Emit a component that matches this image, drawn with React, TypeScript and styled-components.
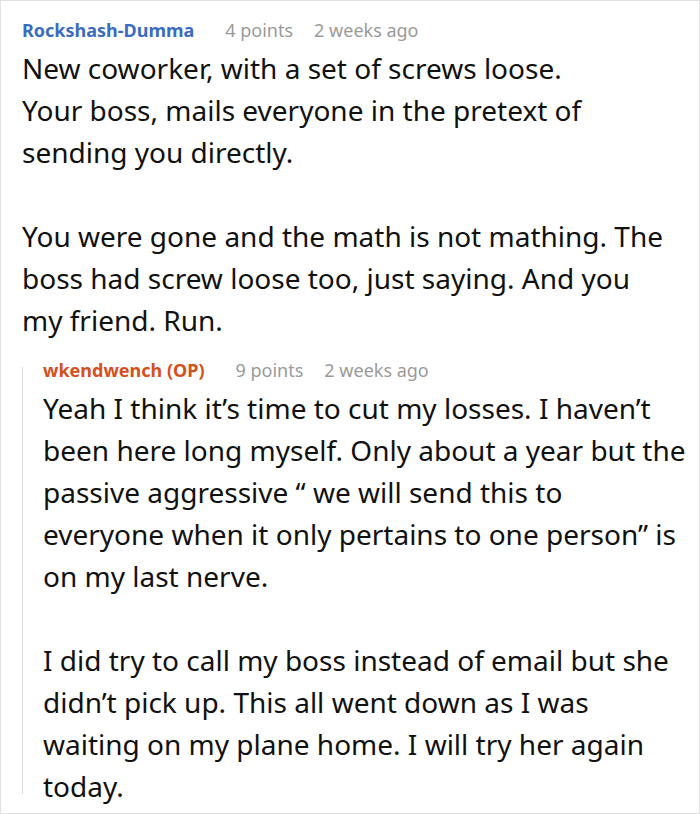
import * as React from 'react';
import styled, { createGlobalStyle } from 'styled-components';

const GlobalStyle = createGlobalStyle`
  html, body {
    margin: 0;
    padding: 0;
    background: #ffffff;
  }
  body {
    font-family: "Noto Sans", "Open Sans", sans-serif;
  }
`;

const Frame = styled.div`
  box-sizing: border-box;
  width: 700px;
  height: 814px;
  border: 1px solid #e2e2e2;
  padding: 12px 29px 0 21px;
  overflow: hidden;
`;

// replies hang slightly wider than their parent
const Comment = styled.div<{ $reply?: boolean }>`
  position: relative;
  display: flex;
  flex-direction: column;
  ${(p) =>
    p.$reply &&
    `
    margin-top: 12px;
    margin-right: -18px;
    padding-left: 21px;
    &::before {
      content: "";
      position: absolute;
      left: 0;
      top: 14px;
      bottom: 13px;
      width: 1px;
      background: #dcdcdc;
    }
  `}
`;

const Meta = styled.div`
  display: flex;
  align-items: baseline;
  gap: 21px;
  font-size: 18px;
  line-height: 34px;
  color: #9a9a9a;
  white-space: nowrap;
`;

const Author = styled.span<{ $op?: boolean }>`
  font-weight: 700;
  color: ${(p) => (p.$op ? '#d4501d' : '#3b6cbf')};
  margin-right: 10px;
`;

const Body = styled.div`
  font-size: 28px;
  line-height: 42px;
  color: #111111;
  p {
    margin: 0;
  }
  p + p {
    margin-top: 42px;
  }
`;

type CommentData = {
  author: string;
  op?: boolean;
  points: number;
  when: string;
  paragraphs: string[];
};

const parent: CommentData = {
  author: 'Rockshash-Dumma',
  points: 4,
  when: '2 weeks ago',
  paragraphs: [
    'New coworker, with a set of screws loose.\nYour boss, mails everyone in the pretext of sending you directly.',
    'You were gone and the math is not mathing. The boss had screw loose too, just saying. And you my friend. Run.',
  ],
};

const reply: CommentData = {
  author: 'wkendwench (OP)',
  op: true,
  points: 9,
  when: '2 weeks ago',
  paragraphs: [
    'Yeah I think it\u2019s time to cut my losses. I haven\u2019t been here long myself. Only about a year but the passive aggressive \u201c we will send this to everyone when it only pertains to one person\u201d is on my last nerve.',
    'I did try to call my boss instead of email but she didn\u2019t pick up. This all went down as I was waiting on my plane home. I will try her again today.',
  ],
};

function Paragraph({ text }: { text: string }) {
  const lines = text.split('\n');
  return (
    <p>
      {lines.map((l, i) => (
        <React.Fragment key={i}>
          {i > 0 && <br />}
          {l}
        </React.Fragment>
      ))}
    </p>
  );
}

function CommentBlock({ data, reply, children }: { data: CommentData; reply?: boolean; children?: React.ReactNode }) {
  return (
    <Comment $reply={reply}>
      <Meta>
        <Author $op={data.op}>{data.author}</Author>
        <span>{data.points} points</span>
        <span>{data.when}</span>
      </Meta>
      <Body>
        {data.paragraphs.map((t, i) => (
          <Paragraph key={i} text={t} />
        ))}
      </Body>
      {children}
    </Comment>
  );
}

export default function App() {
  return (
    <>
      <GlobalStyle />
      <Frame>
        <CommentBlock data={parent}>
          <CommentBlock data={reply} reply />
        </CommentBlock>
      </Frame>
    </>
  );
}
